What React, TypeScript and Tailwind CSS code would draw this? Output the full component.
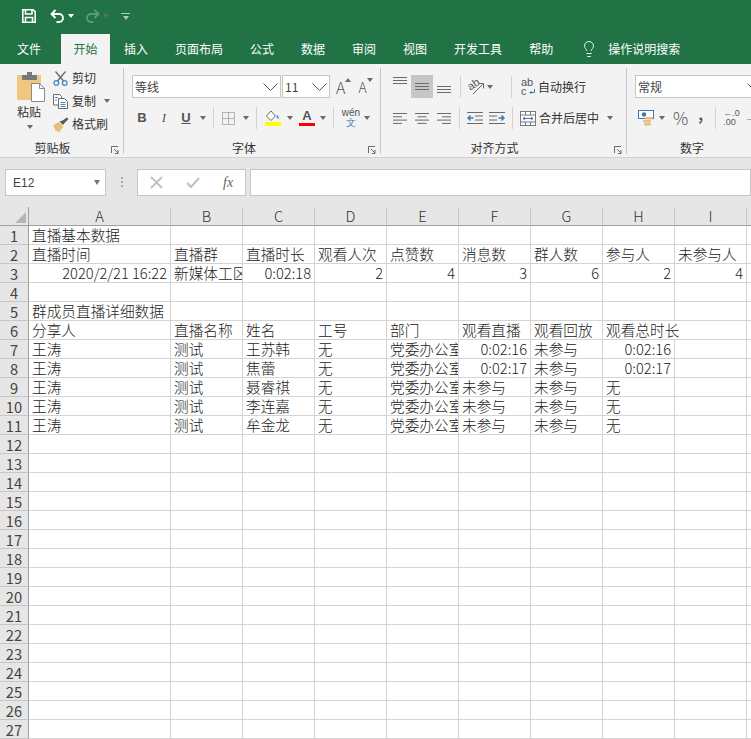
import { Lightbulb } from 'lucide-react';
import type { ReactNode } from 'react';

const COLS = [
  { label: 'A', w: 'w-[142px]' },
  { label: 'B', w: 'w-[72px]' },
  { label: 'C', w: 'w-[72px]' },
  { label: 'D', w: 'w-[72px]' },
  { label: 'E', w: 'w-[72px]' },
  { label: 'F', w: 'w-[72px]' },
  { label: 'G', w: 'w-[72px]' },
  { label: 'H', w: 'w-[72px]' },
  { label: 'I', w: 'w-[72px]' },
  { label: '', w: 'w-[72px]' },
];

const DATA: Record<number, string[]> = {
  1: ['直播基本数据'],
  2: ['直播时间', '直播群', '直播时长', '观看人次', '点赞数', '消息数', '群人数', '参与人', '未参与人'],
  3: ['2020/2/21 16:22', '新媒体工区', '0:02:18', '2', '4', '3', '6', '2', '4'],
  5: ['群成员直播详细数据'],
  6: ['分享人', '直播名称', '姓名', '工号', '部门', '观看直播', '观看回放', '观看总时长'],
  7: ['王涛', '测试', '王苏韩', '无', '党委办公室', '0:02:16', '未参与', '0:02:16'],
  8: ['王涛', '测试', '焦蕾', '无', '党委办公室', '0:02:17', '未参与', '0:02:17'],
  9: ['王涛', '测试', '聂睿祺', '无', '党委办公室', '未参与', '未参与', '无'],
  10: ['王涛', '测试', '李连嘉', '无', '党委办公室', '未参与', '未参与', '无'],
  11: ['王涛', '测试', '牟金龙', '无', '党委办公室', '未参与', '未参与', '无'],
};

const ROWS = Array.from({ length: 27 }, (_, i) => i + 1);
const TABS = ['插入', '页面布局', '公式', '数据', '审阅', '视图', '开发工具', '帮助'];

const Arrow = ({ className = '' }: { className?: string }) => (
  <span className={`h-0 w-0 shrink-0 border-x-[3.5px] border-t-[4px] border-x-transparent border-t-[#6a6a6a] ${className}`} />
);

const Sep = ({ className = '' }: { className?: string }) => (
  <span className={`h-[22px] w-px shrink-0 bg-[#d2d2d2] ${className}`} />
);

const Launcher = () => (
  <svg width="8" height="8" viewBox="0 0 8 8" className="shrink-0" fill="none" stroke="#6a6a6a">
    <path d="M.5 7V.5H7M3 3l4 4M7 4v3.500H4" />
  </svg>
);

const Group = ({ label, width, labelPad, children }: { label: string; width: string; labelPad: string; children: ReactNode }) => (
  <div className={`flex h-full shrink-0 flex-col border-r border-[#c6c6c6] ${width}`}>
    <div className="flex h-[69px] flex-col">{children}</div>
    <div className={`relative flex h-[17px] items-start justify-center text-xs leading-[22px] text-[#333] ${labelPad}`}>
      {label}
      <span className="absolute right-[4px] top-[9px]">
        <Launcher />
      </span>
    </div>
  </div>
);

const Combo = ({ text, width }: { text: string; width: string }) => (
  <div className={`flex h-[23px] shrink-0 items-center justify-between border border-[#c6c6c6] bg-white pl-[2px] pr-[2px] text-xs text-[#444] ${width}`}>
    <span>{text}</span>
    <svg width="15" height="8" viewBox="0 0 15 8" fill="none" stroke="#555" className="shrink-0">
      <path d="M.5.5 7.500 7.500 14.500.5" />
    </svg>
  </div>
);

const Lines = ({ kind }: { kind: 'l' | 'c' | 'r' }) => {
  const w = [14, 9, 14, 9];
  return (
    <svg width="14" height="11" viewBox="0 0 14 11" className="shrink-0" stroke="#6a6a6a">
      {w.map((len, i) => {
        const x = kind === 'l' ? 0 : kind === 'c' ? (14 - len) / 2 : 14 - len;
        return <path key={i} d={`M${x} ${i * 3.3 + 0.5}h${len}`} />;
      })}
    </svg>
  );
};

const VLines = () => (
  <svg width="14" height="8" viewBox="0 0 14 8" stroke="#6a6a6a" className="shrink-0">
    <path d="M0 .5h14M0 3.500h14M0 6.500h14" />
  </svg>
);

const SaveIcon = () => (
  <svg width="16" height="16" viewBox="0 0 16 16" fill="none" stroke="#fff" strokeWidth="1.6">
    <path d="M1.800 1.800h10.400l2 2v10.400H1.800z" />
    <path d="M4.500 2v4h6.500V2M4.500 14.200V9.500h7v4.700" />
  </svg>
);

const UndoIcon = ({ color, flip = false }: { color: string; flip?: boolean }) => (
  <svg width="15" height="14" viewBox="0 0 15 14" fill="none" stroke={color} strokeWidth="1.800" className={flip ? '-scale-x-100' : ''}>
    <path d="M5.500 1 1.500 5l4 4M1.500 5H9a4 4 0 0 1 0 8H6.500" />
  </svg>
);

const PasteIcon = () => (
  <svg width="29" height="30" viewBox="0 0 29 30" className="shrink-0">
    <rect x="0" y="3" width="24" height="25" fill="#efc77f" />
    <path d="M5 8V3h5V0h5v3h5v5z" fill="#797979" />
    <path d="M14.500 11.500h8l5 5v13h-13z" fill="#fff" stroke="#8a8a8a" />
    <path d="M22.500 11.500v5h5" fill="none" stroke="#8a8a8a" />
  </svg>
);

const ScissorsIcon = () => (
  <svg width="15" height="15" viewBox="0 0 15 15" fill="none" className="shrink-0">
    <path d="M2.500 .5 10.500 10M12.500 .5 4.500 10" stroke="#6a6a6a" strokeWidth="1.300" />
    <circle cx="3.300" cy="12" r="2.300" stroke="#4a86c5" strokeWidth="1.300" />
    <circle cx="11.700" cy="12" r="2.300" stroke="#4a86c5" strokeWidth="1.300" />
  </svg>
);

const CopyIcon = () => (
  <svg width="15" height="15" viewBox="0 0 15 15" fill="#fff" stroke="#6a6a6a" className="shrink-0">
    <path d="M.5.5h6l2 2v8.500h-8z" />
    <path d="M5.500 4.500h6l3 3v7h-9z" />
    <path d="M2 3.500h3M2 6h2M7.500 8.500h5M7.500 10.500h5M7.500 12.500h5" stroke="#4a86c5" />
  </svg>
);

const BrushIcon = () => (
  <svg width="16" height="15" viewBox="0 0 16 15" className="shrink-0">
    <path d="M0 8.500 5.500 5l5 4.500L6.500 15H5l-1-1.500-1 1-1-2z" fill="#e8bf7a" />
    <path d="m6.500 4.500 3.500 3.500 1.500-2 4-4L14 .5 9.500 3.500z" fill="#5a5a5a" />
  </svg>
);

const BorderIcon = () => (
  <svg width="13" height="13" viewBox="0 0 13 13" stroke="#777" strokeDasharray="1 1" fill="none" className="shrink-0">
    <path d="M.5.5h12v12H.5zM6.500.5v12M.5 6.500h12" />
  </svg>
);

const FillIcon = () => (
  <svg width="16" height="16" viewBox="0 0 16 16" className="shrink-0">
    <path d="M6 1 1.500 6 6 10.500 10.500 6z" fill="#fff" stroke="#6a6a6a" />
    <path d="M11.500 5c2 1 2.500 2.500 2 4-1-.5-2-1.500-2-4z" fill="#3f78b5" />
    <rect y="12" width="16" height="4" fill="#ffff00" />
  </svg>
);

const WrapIcon = () => (
  <div className="relative h-[18px] w-[14px] shrink-0 font-['Liberation_Sans'] text-[11px] leading-[9px] text-[#555]">
    ab
    <br />
    c
    <svg width="6" height="6" viewBox="0 0 6 6" fill="none" stroke="#3f78b5" className="absolute bottom-[1px] right-0">
      <path d="M5.500 0v3.500H1M2.500 2 1 3.500 2.500 5" />
    </svg>
  </div>
);

const MergeIcon = () => (
  <svg width="16" height="15" viewBox="0 0 16 15" fill="#fff" stroke="#777" className="shrink-0">
    <rect x=".5" y=".5" width="15" height="14" />
    <path d="M.5 4h15M.5 11h15M5.500 .5V4M10.500 .5V4M5.500 11v3.500M10.500 11v3.500" />
    <path d="M3 7.500h10M5 6 3 7.500 5 9M11 6 13 7.500 11 9" stroke="#3f78b5" fill="none" />
  </svg>
);

const OrientIcon = () => (
  <div className="relative h-[16px] w-[17px] shrink-0">
    <span className="absolute left-0 top-[-1px] origin-center -rotate-[35deg] font-['Liberation_Sans'] text-[11px] leading-[12px] text-[#555]">ab</span>
    <svg width="17" height="16" viewBox="0 0 17 16" fill="none" stroke="#666" className="absolute inset-0">
      <path d="M6 15 15.500 5.500M11.500 4.500H16.500V9.500" />
    </svg>
  </div>
);

const IndentIcon = ({ flip = false }: { flip?: boolean }) => (
  <svg width="16" height="12" viewBox="0 0 16 12" className={`shrink-0 ${flip ? '-scale-x-100' : ''}`} stroke="#6a6a6a">
    <path d="M0 .5h16M8 4h8M8 8h8M0 11.500h16" />
    <path d="M6.500 6H1M3.500 3.500 1 6l2.500 2.500" fill="none" stroke="#3f78b5" strokeWidth="1.500" />
  </svg>
);

const MoneyIcon = () => (
  <svg width="16" height="16" viewBox="0 0 16 16" className="shrink-0">
    <rect x=".5" y=".5" width="15" height="8" fill="#fff" stroke="#3f78b5" />
    <circle cx="6" cy="4.500" r="2.200" fill="#3f78b5" />
    <rect x="7" y="7" width="8" height="2.500" rx="1" fill="#e8bf7a" />
    <rect x="5" y="10" width="8" height="2.500" rx="1" fill="#e8bf7a" />
    <rect x="6" y="13" width="7" height="2.500" rx="1" fill="#e8bf7a" />
  </svg>
);

const GridRow = ({ r }: { r: number }) => {
  const row = DATA[r] ?? [];
  return (
    <div className="flex h-[19px]">
      <div className="w-[29px] shrink-0 border-b border-r border-b-[#c6c6c6] border-r-[#9f9f9f] bg-[#e6e6e6] text-center text-[14.67px] leading-[20px] text-[#444]">
        {r}
      </div>
      {COLS.map((col, i) => {
        const v = row[i];
        const numeric = v && /^[\d:/ ]+$/.test(v);
        // long text is cut by the next cell when that cell has a value, else it runs over
        const clipped = v === '新媒体工区' || v === '党委办公室';
        const spill = v === '观看总时长';
        return (
          <div
            key={col.w + i}
            className={`${col.w} shrink-0 border-b border-[#d4d4d4] px-[3px] text-[14.67px] font-light leading-[19px] whitespace-nowrap text-[#222] ${numeric ? 'text-right' : 'text-left'} ${clipped ? 'overflow-hidden' : ''} ${spill ? '' : 'border-r'}`}
          >
            <span className="relative -top-px">{v}</span>
          </div>
        );
      })}
    </div>
  );
};

export default function App() {
  return (
    <div className="h-[739px] w-[751px] overflow-hidden bg-white font-['Noto_Sans_CJK_SC','Liberation_Sans',sans-serif]">
      {/* title bar */}
      <div className="flex h-[34px] items-center bg-[#217346] pb-[2px] pl-[21px]">
        <SaveIcon />
        <span className="ml-[13px]"><UndoIcon color="#fff" /></span>
        <Arrow className="ml-[3px] border-t-white" />
        <span className="ml-[11px]"><UndoIcon color="#5f9a7b" flip /></span>
        <Arrow className="ml-[3px] border-t-[#5f9a7b]" />
        <span className="ml-[12px] flex flex-col items-center gap-[2px]">
          <span className="h-px w-[9px] bg-[#a9cdb9]" />
          <Arrow className="border-t-[#a9cdb9]" />
        </span>
      </div>

      {/* tabs */}
      <div className="flex h-[30px] items-center gap-[27px] bg-[#217346] pl-[17px] text-xs text-white">
        <span>文件</span>
        <span className="-ml-[7px] -mr-[13px] flex h-full w-[49px] items-center justify-center bg-[#f3f3f3] text-[#217346]">开始</span>
        {TABS.map(t => (
          <span key={t}>{t}</span>
        ))}
        <span className="flex items-center gap-[10px]">
          <Lightbulb size={18} strokeWidth={1.2} />
          操作说明搜索
        </span>
      </div>

      {/* ribbon */}
      <div className="flex h-[94px] border-b border-[#d2d2d2] bg-[#f3f3f3] pb-[3px] pt-[4px] text-xs text-[#333]">
        <Group label="剪贴板" width="w-[124px]" labelPad="pr-[18px]">
          <div className="flex pl-[17px] pt-[4px]">
            <div className="flex w-[36px] flex-col items-start">
              <PasteIcon />
              <span className="mt-[2px]">粘贴</span>
              <Arrow className="ml-[10px] mt-[5px]" />
            </div>
            <div className="-mt-[4px] flex flex-col gap-[3px]">
              <div className="flex h-[20px] items-center gap-[4px] whitespace-nowrap"><ScissorsIcon />剪切</div>
              <div className="flex h-[20px] items-center gap-[4px] whitespace-nowrap"><CopyIcon />复制<Arrow className="ml-[4px]" /></div>
              <div className="flex h-[20px] items-center gap-[3px] whitespace-nowrap"><BrushIcon />格式刷</div>
            </div>
          </div>
        </Group>

        <Group label="字体" width="w-[257px]" labelPad="pr-[16px]">
          <div className="flex items-center pl-[8px] pt-[7px]">
            <Combo text="等线" width="w-[149px]" />
            <Combo text="11" width="w-[48px] ml-px" />
            <span className="ml-[6px] flex items-start text-[16px] font-light leading-[20px] text-[#555]">A<Arrow className="mt-[1px] rotate-180 border-t-[#3f78b5]" /></span>
            <span className="ml-[7px] flex items-start text-[14px] font-light leading-[20px] text-[#555]">A<Arrow className="mt-[1px] border-t-[#3f78b5]" /></span>
          </div>
          <div className="mt-[9px] flex h-[22px] items-center pl-[7px] font-['Liberation_Sans'] text-[13px] text-[#555]">
            <span className="w-[22px] text-center font-bold">B</span>
            <span className="w-[22px] text-center font-['Liberation_Serif'] italic">I</span>
            <span className="w-[22px] text-center font-bold underline">U</span>
            <Arrow className="ml-[3px]" />
            <Sep className="ml-[7px]" />
            <span className="ml-[8px]"><BorderIcon /></span>
            <Arrow className="ml-[8px]" />
            <Sep className="ml-[7px]" />
            <span className="ml-[8px]"><FillIcon /></span>
            <Arrow className="ml-[6px]" />
            <span className="ml-[6px] flex h-[16px] w-[16px] flex-col items-center">
              <span className="text-[13px] font-bold leading-[12px]">A</span>
              <span className="mt-px h-[4px] w-full bg-[#ff0000]" />
            </span>
            <Arrow className="ml-[5px]" />
            <Sep className="ml-[7px]" />
            <span className="ml-[9px] flex w-[16px] flex-col items-center text-[10px] leading-[10px]">
              wén
              <span className="text-[#3f78b5]">文</span>
            </span>
            <Arrow className="ml-[5px]" />
          </div>
        </Group>

        <Group label="对齐方式" width="w-[246px]" labelPad="pr-[18px]">
          <div className="flex items-center pl-[8px] pt-[7px]">
            <span className="flex h-[23px] w-[22px] items-start justify-center pt-[2px]"><VLines /></span>
            <span className="flex h-[23px] w-[22px] items-center justify-center bg-[#c6c6c6]"><VLines /></span>
            <span className="flex h-[23px] w-[22px] items-end justify-center pb-[4px]"><VLines /></span>
            <Sep className="ml-[5px]" />
            <span className="ml-[6px]"><OrientIcon /></span>
            <Arrow className="ml-[3px]" />
            <Sep className="ml-[18px]" />
            <span className="ml-[9px] flex items-center gap-[3px]"><WrapIcon />自动换行</span>
          </div>
          <div className="mt-[9px] flex h-[22px] items-center pl-[12px]">
            <Lines kind="l" />
            <span className="ml-[8px]"><Lines kind="c" /></span>
            <span className="ml-[8px]"><Lines kind="r" /></span>
            <Sep className="ml-[8px]" />
            <span className="ml-[7px]"><IndentIcon /></span>
            <span className="ml-[6px]"><IndentIcon flip /></span>
            <Sep className="ml-[7px]" />
            <span className="ml-[7px] flex items-center gap-[3px]"><MergeIcon />合并后居中</span>
            <Arrow className="ml-[8px]" />
          </div>
        </Group>

        <div className="relative flex h-full flex-1 flex-col overflow-hidden">
          <div className="flex h-[69px] flex-col">
            <div className="pl-[8px] pt-[7px]">
              <Combo text="常规" width="w-[130px]" />
            </div>
            <div className="mt-[9px] flex h-[22px] items-center pl-[11px]">
              <MoneyIcon />
              <Arrow className="ml-[5px]" />
              <span className="ml-[8px] shrink-0 text-[17px] font-light leading-[20px] text-[#555]">%</span>
              <span className="-mt-[8px] ml-[10px] shrink-0 text-[15px] font-bold leading-[20px] text-[#555]">,</span>
              <Sep className="ml-[12px]" />
              <span className="ml-[7px] w-[16px] shrink-0 whitespace-nowrap font-['Liberation_Sans'] text-[9px] leading-[9px] text-[#555]"><span className="text-[#3f78b5]">←</span>.0<br />.00</span>
              <span className="ml-[6px] w-[16px] shrink-0 whitespace-nowrap font-['Liberation_Sans'] text-[9px] leading-[9px] text-[#3f78b5]">→</span>
            </div>
          </div>
          <div className="flex h-[17px] w-[124px] justify-center pl-[6px] leading-[22px]">数字</div>
        </div>
      </div>

      {/* formula bar */}
      <div className="flex h-[49px] items-start bg-[#e6e6e6] pl-[5px] pt-[11px]">
        <div className="flex h-[27px] w-[101px] items-center justify-between border border-[#c6c6c6] bg-white pl-[7px] pr-[5px] font-['Liberation_Sans'] text-[12px] text-[#444]">
          E12
          <Arrow className="border-x-4 border-t-[5px] border-t-[#777]" />
        </div>
        <span className="ml-[15px] mt-[8px] flex flex-col gap-[2px]">
          <span className="h-[2px] w-[2px] bg-[#aaa]" />
          <span className="h-[2px] w-[2px] bg-[#aaa]" />
          <span className="h-[2px] w-[2px] bg-[#aaa]" />
        </span>
        <div className="ml-[14px] flex h-[27px] w-[109px] items-center border border-[#c6c6c6] bg-white pl-[12px]">
          <svg width="13" height="13" viewBox="0 0 13 13" stroke="#c0c0c0" strokeWidth="1.800"><path d="M1 1l11 11M12 1 1 12" /></svg>
          <svg width="14" height="13" viewBox="0 0 14 13" stroke="#c0c0c0" strokeWidth="2" fill="none" className="ml-[23px]"><path d="m1 7 4 4 8-9" /></svg>
          <span className="ml-[23px] font-['Liberation_Serif'] text-[14px] italic text-[#666]">fx</span>
        </div>
        <div className="ml-[4px] h-[27px] flex-1 border border-[#c6c6c6] bg-white" />
      </div>

      {/* column headers */}
      <div className="flex h-[19px]">
        <div className="relative w-[29px] shrink-0 border-b border-r border-b-[#9f9f9f] border-r-[#9f9f9f] bg-[#e6e6e6]">
          <span className="absolute bottom-[2px] right-[2px] h-0 w-0 border-b-[11px] border-l-[11px] border-b-[#b5b5b5] border-l-transparent" />
        </div>
        {COLS.map((col, i) => (
          <div key={col.w + i} className={`${col.w} shrink-0 border-b border-r border-b-[#9f9f9f] border-r-[#c6c6c6] bg-[#e6e6e6] text-center text-[14.67px] font-light leading-[18px] text-[#333]`}>
            {col.label}
          </div>
        ))}
      </div>

      {ROWS.map(r => (
        <GridRow key={r} r={r} />
      ))}
    </div>
  );
}
